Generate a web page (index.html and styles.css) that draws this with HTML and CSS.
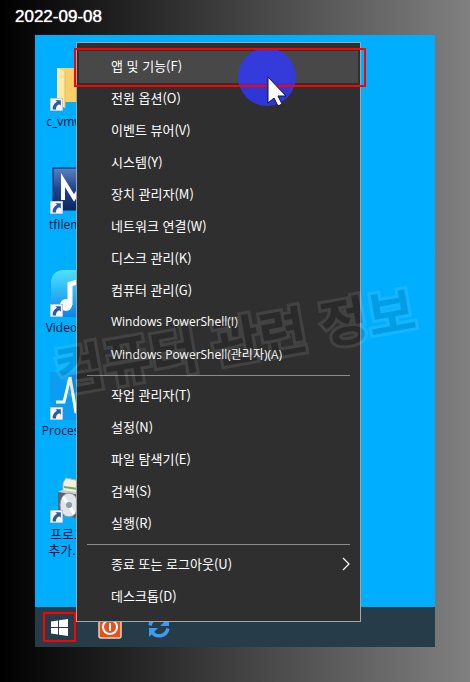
FILE: index.html
```
<!DOCTYPE html>
<html lang="ko">

<head>
    <meta charset="UTF-8">
    <meta name="viewport" content="width=device-width, initial-scale=1.0">
    <title>앱 및 기능</title>
    <link rel="stylesheet" href="styles.css">
</head>

<body>
    <!-- shared shortcut arrow -->
    <svg class="defs" width="0" height="0">
        <symbol id="arrow" viewBox="0 0 12 12">
            <rect width="12" height="12" fill="#f4f4f4" stroke="#9aa7b5" stroke-width="1" />
            <path d="M5 2h5v5L8.500 5.800C6 7 5.500 8.500 5.500 10.500H2.500C2 8 3.500 5 6.500 3.500z" fill="#2a5a9f" />
        </symbol>
    </svg>

    <header class="date">2022-09-08</header>

    <main class="screen">
        <div class="desktop">
            <div class="shortcut">
                <svg class="picture" viewBox="0 0 48 48">
                    <path d="M7 5h38v34H7z" fill="#f9cf6b" />
                    <path d="M7 5l8 3v37l-8-4z" fill="#ffe9a6" />
                    <path d="M15 8v37" stroke="#e8b850" />
                    <use href="#arrow" x="0" y="35" width="13" height="13" />
                </svg>
                <span>c_vmware</span>
            </div>
            <div class="shortcut">
                <svg class="picture" viewBox="0 0 48 48">
                    <defs>
                        <linearGradient id="navy" x2="0" y2="1">
                            <stop offset="0" stop-color="#5b82c4" />
                            <stop offset=".5" stop-color="#20448c" />
                            <stop offset="1" stop-color="#0c2560" />
                        </linearGradient>
                    </defs>
                    <rect x="3" y="2" width="42" height="42" fill="url(#navy)" stroke="#0b1f5c" />
                    <path d="M13 34V14l11 18 11-18v20" fill="none" stroke="#fff" stroke-width="4" />
                    <use href="#arrow" x="0" y="35" width="13" height="13" />
                </svg>
                <span>tfilemate</span>
            </div>
            <div class="shortcut">
                <svg class="picture" viewBox="0 0 48 48">
                    <defs>
                        <linearGradient id="aqua" x2="0" y2="1">
                            <stop offset="0" stop-color="#4fe0ff" />
                            <stop offset="1" stop-color="#0a84e8" />
                        </linearGradient>
                    </defs>
                    <rect x="1" y="1" width="46" height="47" rx="12" fill="url(#aqua)" />
                    <path d="M20 36V15l17-5v20" fill="none" stroke="#fff" stroke-width="5" />
                    <circle cx="16" cy="36" r="6" fill="#fff" />
                    <circle cx="32" cy="32" r="6" fill="#fff" />
                    <use href="#arrow" x="0" y="35" width="13" height="13" />
                </svg>
                <span>Video Con</span>
            </div>
            <div class="shortcut">
                <svg class="picture" viewBox="0 0 48 48">
                    <rect width="48" height="48" fill="#0b9df0" />
                    <path d="M6 30h8l6-25 6 36 6-24 4 13h8" fill="none" stroke="#fff" stroke-width="3" />
                    <use href="#arrow" x="0" y="35" width="13" height="13" />
                </svg>
                <span>Process Mo</span>
            </div>
            <div class="shortcut">
                <svg class="picture" viewBox="0 0 48 48">
                    <path d="M13 8l3-5 14 3v18l-17-2z" fill="#f3f0e2" stroke="#b6b3a4" />
                    <path d="M14 12l14 2" stroke="#6fae5c" stroke-width="2" />
                    <path d="M8 17l32 3v25l-32-5z" fill="#59636b" />
                    <path d="M8 17l4-2 28 4v2z" fill="#c9ced2" />
                    <ellipse cx="19" cy="30" rx="9" ry="12" fill="#dfe5e8" stroke="#8d979e" />
                    <path d="M19 30l-6-8M19 30l5 9" stroke="#fff" stroke-width="3" />
                    <circle cx="19" cy="30" r="3" fill="#8d9aa3" />
                    <use href="#arrow" x="0" y="35" width="13" height="13" />
                </svg>
                <span class="hangul">프로그램<br>추가.제거</span>
            </div>
        </div>

        <footer class="taskbar">
            <button class="start" type="button" aria-label="시작">
                <svg width="17" height="17" viewBox="0 0 17 17" fill="#fff">
                    <path d="M0 2.400l7-1V8H0zM8 1.200L17 0v8H8zM0 9h7v6.600l-7-1zM8 9h9v8l-9-1.200z" />
                </svg>
            </button>
            <button class="task" type="button" aria-label="전원">
                <svg width="24" height="24" viewBox="0 0 24 24">
                    <rect x="1" y="1" width="22" height="22" rx="2" fill="#e2521d" stroke="#f7cdb8" stroke-width="1.500" />
                    <circle cx="12" cy="12" r="7" fill="none" stroke="#fff" stroke-width="2" />
                    <path d="M12 8v8" stroke="#fff" stroke-width="2" />
                </svg>
            </button>
            <button class="task" type="button" aria-label="동기화">
                <svg width="22" height="22" viewBox="0 0 22 22">
                    <path d="M2 9.500C4 1 14 0 18 6M20 12.500C18 21 8 22 4 16" fill="none" stroke="#3b9cf0" stroke-width="3.500" />
                    <path d="M21 1v9h-9zM1 21v-9h9z" fill="#3b9cf0" />
                </svg>
            </button>
        </footer>

        <nav class="menu">
            <button class="item active" type="button">앱 및 기능(F)</button>
            <button class="item" type="button">전원 옵션(O)</button>
            <button class="item" type="button">이벤트 뷰어(V)</button>
            <button class="item" type="button">시스템(Y)</button>
            <button class="item" type="button">장치 관리자(M)</button>
            <button class="item" type="button">네트워크 연결(W)</button>
            <button class="item" type="button">디스크 관리(K)</button>
            <button class="item" type="button">컴퓨터 관리(G)</button>
            <button class="item latin" type="button">Windows PowerShell(I)</button>
            <button class="item latin" type="button">Windows PowerShell(관리자)(A)</button>
            <hr>
            <button class="item" type="button">작업 관리자(T)</button>
            <button class="item" type="button">설정(N)</button>
            <button class="item" type="button">파일 탐색기(E)</button>
            <button class="item" type="button">검색(S)</button>
            <button class="item" type="button">실행(R)</button>
            <hr>
            <button class="item" type="button">종료 또는 로그아웃(U)
                <svg width="8" height="14" viewBox="0 0 8 14">
                    <path d="M1 1l6 6-6 6" fill="none" stroke="#fff" stroke-width="1.200" />
                </svg>
            </button>
            <button class="item" type="button">데스크톱(D)</button>
        </nav>

        <div class="watermark">컴퓨터 관련 정보</div>
        <div class="click"></div>
        <div class="marker"></div>
        <svg class="cursor" width="20" height="32" viewBox="0 0 20 32">
            <path d="M1 1v26l6-5 4 8 4-2-4-8h8z" fill="#fff" stroke="#10103a" stroke-width="1" />
        </svg>
    </main>
</body>

</html>
```
FILE: styles.css
```
* {
    box-sizing: border-box;
    margin: 0;
    padding: 0;
}

body {
    min-height: 100vh;
    padding: 0 35px 35px;
    background: linear-gradient(to right, #000, #808080);
    font-family: "Noto Sans CJK KR", sans-serif;
    font-size: 13px;
}

button {
    border: none;
    background: none;
    font: inherit;
    color: inherit;
}

.defs {
    position: absolute;
}

.date {
    height: 35px;
    margin-left: -20px;
    font-family: "Liberation Sans", Arial, sans-serif;
    font-size: 17px;
    line-height: 34px;
    color: #fff;
    text-shadow: 0 0 1px #fff;
}

.screen {
    position: relative;
    display: flex;
    flex-direction: column;
    min-height: calc(100vh - 70px);
}

/* Desktop */
.desktop {
    flex: 1;
    display: flex;
    flex-direction: column;
    align-items: flex-start;
    padding: 28px 0 0 1px;
    background: #00aeff;
}

.shortcut {
    display: flex;
    flex-direction: column;
    align-items: center;
    width: 76px;
    height: 103px;
    font-family: "Open Sans", "Noto Sans CJK KR", sans-serif;
    font-size: 12px;
    line-height: 16px;
    text-align: center;
    color: #061436;
}

.shortcut .hangul {
    font-size: 13px;
}

.picture {
    width: 48px;
    height: 48px;
    margin-bottom: 3px;
}

/* Taskbar */
.taskbar {
    display: flex;
    align-items: center;
    height: 40px;
    padding-left: 8px;
    background: #263c48;
}

.start {
    display: flex;
    align-items: center;
    justify-content: center;
    width: 33px;
    height: 30px;
    border: 2px solid #f00;
}

.task {
    display: flex;
    justify-content: center;
    width: 24px;
    margin-left: 22px;
}

.task + .task {
    margin-left: 25px;
}

/* Context menu */
.menu {
    position: absolute;
    top: 7px;
    left: 41px;
    width: 285px;
    padding: 8px 2px;
    border: 1px solid #a0a6aa;
    background: #2f2f2f;
    color: #fff;
}

.item {
    display: flex;
    align-items: center;
    justify-content: space-between;
    width: 100%;
    height: 32px;
    padding: 0 8px 3px 32px;
    text-align: left;
    white-space: nowrap;
}

.item.latin {
    font-family: "Open Sans", "Noto Sans CJK KR", sans-serif;
    font-size: 12px;
}

.item.active,
.item:hover {
    background: #484848;
}

.menu hr {
    height: 1px;
    margin: 4px 8px;
    border: none;
    background: #8c8c8c;
}

/* Overlays */
.watermark {
    position: absolute;
    top: 268px;
    left: 18px;
    font-size: 52px;
    font-weight: 700;
    line-height: 70px;
    white-space: nowrap;
    color: #000;
    -webkit-text-stroke: 6px #fff;
    paint-order: stroke fill;
    opacity: .09;
    transform: rotate(-10deg);
    pointer-events: none;
}

.click {
    position: absolute;
    top: 13px;
    left: 203px;
    width: 58px;
    height: 58px;
    border-radius: 50%;
    background: rgba(48, 56, 255, .8);
    pointer-events: none;
}

.marker {
    position: absolute;
    top: 13px;
    left: 39px;
    width: 292px;
    height: 39px;
    border: 2px solid #f00;
    pointer-events: none;
}

.cursor {
    position: absolute;
    top: 41px;
    left: 232px;
    pointer-events: none;
}
```
